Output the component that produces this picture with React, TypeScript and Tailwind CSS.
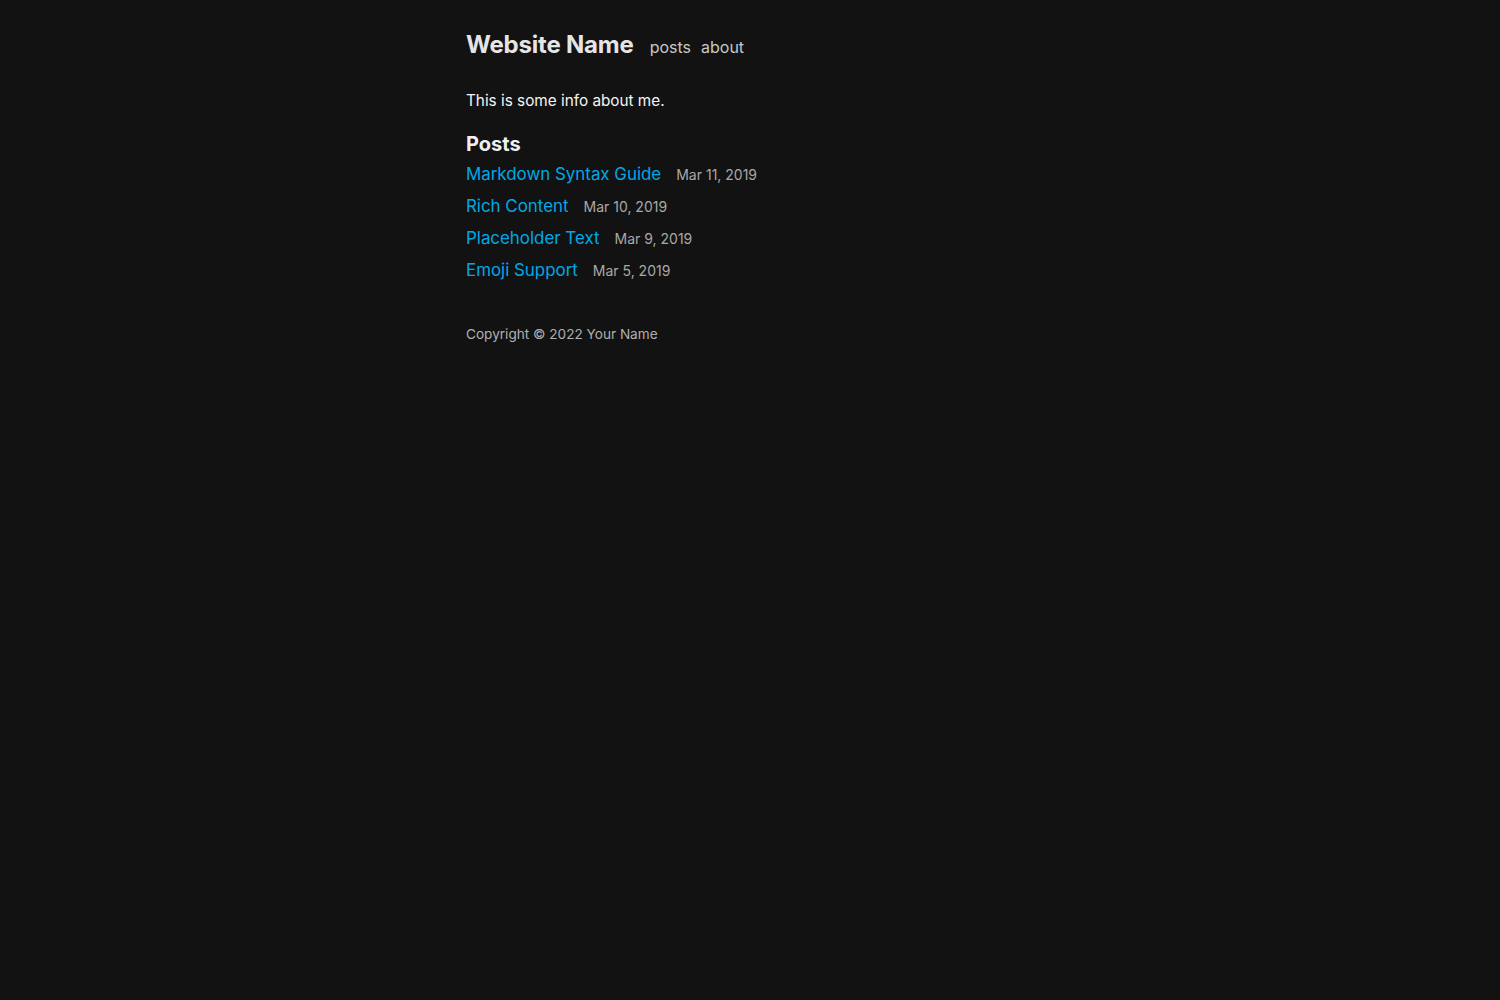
const posts = [
  { title: "Markdown Syntax Guide", date: "Mar 11, 2019" },
  { title: "Rich Content", date: "Mar 10, 2019" },
  { title: "Placeholder Text", date: "Mar 9, 2019" },
  { title: "Emoji Support", date: "Mar 5, 2019" },
];

export default function App() {
  return (
    <div className="min-h-screen bg-[#121212] text-[#f0f0f0] font-['Inter',sans-serif]">
      <div className="mx-auto max-w-[568px] pt-[29px]">
        <header className="flex items-baseline gap-4">
          <a href="#" className="text-[24px] leading-[32px] font-bold text-[#e5e5e5] tracking-[-0.2px]">Website Name</a>
          <nav className="flex gap-[10px] text-[16px] text-[#c8c8c8]">
            <a href="#">posts</a>
            <a href="#">about</a>
          </nav>
        </header>

        <p className="mt-[28px] text-[15.3px] leading-[24px] text-[#f5f5f5]">This is some info about me.</p>

        <h2 className="mt-[17px] text-[20px] leading-[28px] font-bold text-[#f0f0f0]">Posts</h2>
        <ul className="mt-[3px] flex flex-col gap-[5px]">
          {posts.map(p => (
            <li key={p.title} className="flex items-baseline gap-[15px]">
              <a href="#" className="text-[16.9px] leading-[27px] text-[#00a8e6]">{p.title}</a>
              <span className="text-[14px] text-[#a8a8a8]">{p.date}</span>
            </li>
          ))}
        </ul>

        <footer className="mt-[40px] text-[13.6px] leading-[20px] text-[#b0b0b0]">Copyright © 2022 Your Name</footer>
      </div>
    </div>
  );
}
